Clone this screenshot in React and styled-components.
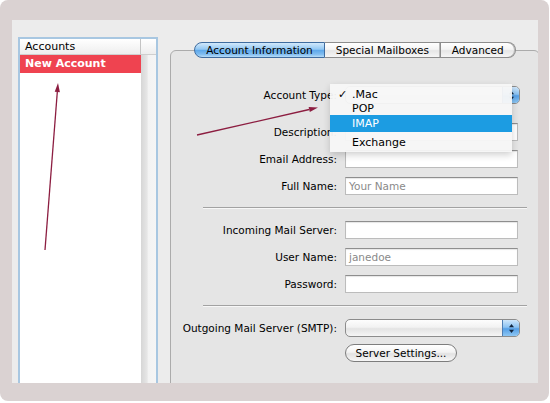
import styled, { createGlobalStyle } from "styled-components";

const GlobalStyle = createGlobalStyle`
  html, body {
    margin: 0;
    padding: 0;
    background: #ffffff;
  }
  body {
    font-family: "DejaVu Sans", "Liberation Sans", sans-serif;
    font-size: 10.5px;
    color: #000;
  }
`;

const Frame = styled.div`
  position: relative;
  width: 549px;
  height: 401px;
  box-sizing: border-box;
  padding: 20px 11px 18px 12px;
  background: #dad2d2;
  border-radius: 8px;
`;

const Window = styled.div`
  display: flex;
  gap: 12px;
  height: 100%;
  box-sizing: border-box;
  padding: 17px 0 0 6px;
  background: #ececec;
  overflow: hidden;
`;

const Sidebar = styled.div`
  flex: 0 0 140px;
  height: 360px;
  box-sizing: border-box;
  display: flex;
  border: 2px solid #a8c7e1;
  border-bottom: none;
  background: #fff;
`;

const ListCol = styled.div`
  flex: 1;
  display: flex;
  flex-direction: column;
`;

const ListHeader = styled.div`
  height: 16px;
  box-sizing: border-box;
  padding-left: 5px;
  line-height: 15px;
  font-size: 11px;
  background: linear-gradient(#ffffff, #eeeeee);
  border-bottom: 1px solid #cfcfcf;
  border-right: 1px solid #c4c4c4;
`;

const ListRow = styled.div`
  height: 18px;
  padding-left: 5px;
  line-height: 18px;
  font-size: 11px;
  font-weight: bold;
  color: ${(p) => (p.$selected ? "#fff" : "#000")};
  background: ${(p) => (p.$selected ? "#ef4350" : "transparent")};
`;

const Scroller = styled.div`
  flex: 0 0 15px;
  display: flex;
  flex-direction: column;
`;

const ScrollCorner = styled.div`
  height: 16px;
  box-sizing: border-box;
  background: linear-gradient(#ffffff, #eeeeee);
  border-bottom: 1px solid #cfcfcf;
`;

const ScrollTrack = styled.div`
  flex: 1;
  background: linear-gradient(to right, #d6d6d6, #e6e6e6 40%, #f3f3f3 50%, #f5f5f5);
`;

const Main = styled.div`
  flex: 0 0 370px;
  padding-top: 13px;
`;

const TabBox = styled.div`
  height: 360px;
  border: 1px solid #ababab;
  border-radius: 6px;
  background: #e5e5e5;
`;

const TabBar = styled.div`
  display: flex;
  justify-content: center;
  margin-top: -9px;
`;

const Tab = styled.div`
  height: 16px;
  box-sizing: border-box;
  padding: 0 11px;
  line-height: 14px;
  white-space: nowrap;
  border: 1px solid ${(p) => (p.$active ? "#3f6c9f" : "#8d8d8d")};
  border-left-width: ${(p) => (p.$first ? "1px" : "0")};
  border-radius: ${(p) => (p.$first ? "8px 0 0 8px" : p.$last ? "0 8px 8px 0" : "0")};
  background: ${(p) =>
    p.$active
      ? "linear-gradient(#d2e9fb, #92c7f3 45%, #5ea8ea 52%, #7fbcf0 80%, #b7dcf8)"
      : "linear-gradient(#ffffff, #f4f4f4 45%, #e6e6e6 55%, #f6f6f6)"};
  box-shadow: ${(p) => (p.$active ? "none" : "inset -1px 0 0 #b8b8b8")};
`;

const Form = styled.div`
  display: flex;
  flex-direction: column;
  gap: 9px;
  padding-top: 28px;
`;

const Row = styled.div`
  display: grid;
  grid-template-columns: 166px 175px;
  column-gap: 8px;
  align-items: center;
  margin-top: ${(p) => p.$extra || 0}px;
`;

const Label = styled.div`
  text-align: right;
  white-space: nowrap;
`;

const TextField = styled.div`
  width: 173px;
  height: 18px;
  box-sizing: border-box;
  padding-left: 3px;
  line-height: 16px;
  background: #fff;
  border: 1px solid #bcbcbc;
  border-top-color: #8e8e8e;
  box-shadow: inset 0 1px 1px rgba(0, 0, 0, 0.1);
  color: #8a8a8a;
`;

const Separator = styled.div`
  width: 324px;
  height: 1px;
  margin: 3px 0 3px 32px;
  background: #a2a2a2;
  border-bottom: 1px solid #f7f7f7;
`;

const PopupWrap = styled.div`
  position: relative;
  width: 175px;
  height: 18px;
`;

const Popup = styled.div`
  display: flex;
  justify-content: flex-end;
  width: 175px;
  height: 18px;
  box-sizing: border-box;
  border: 1px solid #8c8c8c;
  border-radius: 5px;
  overflow: hidden;
  background: linear-gradient(#fdfdfd, #f2f2f2 45%, #e3e3e3 55%, #f5f5f5);
`;

const PopupCap = styled.div`
  display: flex;
  align-items: center;
  justify-content: center;
  width: 16px;
  border-left: 1px solid #4f7eb3;
  background: linear-gradient(#cfe6fa, #8cc3f2 45%, #559fe6 55%, #8ec7f3);
`;

const Menu = styled.div`
  position: absolute;
  left: -15px;
  top: -2px;
  width: 182px;
  padding-top: 2px;
  background: rgba(247, 247, 247, 0.95);
  box-shadow: 0 3px 7px rgba(0, 0, 0, 0.18);
  z-index: 2;
`;

const MenuItem = styled.div`
  display: flex;
  align-items: center;
  height: ${(p) => p.$h}px;
  padding-left: 8px;
  font-size: 11px;
  color: ${(p) => (p.$active ? "#fff" : "#000")};
  background: ${(p) => (p.$active ? "#1c9ce2" : "transparent")};
`;

const Check = styled.span`
  width: 14px;
`;

const PushButton = styled.div`
  width: 112px;
  height: 18px;
  box-sizing: border-box;
  border: 1px solid #7d7d7d;
  border-radius: 9px;
  line-height: 16px;
  text-align: center;
  white-space: nowrap;
  background: linear-gradient(#ffffff, #f3f3f3 45%, #e2e2e2 55%, #f7f7f7);
`;

const Overlay = styled.svg`
  position: absolute;
  top: 0;
  left: 0;
  pointer-events: none;
  z-index: 5;
`;

function Arrow({ x1, y1, x2, y2 }) {
  const len = Math.hypot(x2 - x1, y2 - y1);
  const dx = (x2 - x1) / len;
  const dy = (y2 - y1) / len;
  const bx = x2 - dx * 9;
  const by = y2 - dy * 9;
  const w = 2.6;
  const pts = `${x2},${y2} ${bx - dy * w},${by + dx * w} ${bx + dy * w},${by - dx * w}`;
  return (
    <g>
      <line x1={x1} y1={y1} x2={bx} y2={by} stroke="#8c1d40" strokeWidth="1.3" />
      <polygon points={pts} fill="#8c1d40" />
    </g>
  );
}

function SelectCap() {
  return (
    <PopupCap>
      <svg width="7" height="11" viewBox="0 0 7 11">
        <path d="M3.5 1 L6 4.2 L1 4.2 Z" fill="#12253d" />
        <path d="M3.5 10 L6 6.8 L1 6.8 Z" fill="#12253d" />
      </svg>
    </PopupCap>
  );
}

export default function App() {
  return (
    <>
      <GlobalStyle />
      <Frame>
        <Window>
          <Sidebar>
            <ListCol>
              <ListHeader>Accounts</ListHeader>
              <ListRow $selected>New Account</ListRow>
            </ListCol>
            <Scroller>
              <ScrollCorner />
              <ScrollTrack />
            </Scroller>
          </Sidebar>
          <Main>
            <TabBox>
              <TabBar>
                <Tab $active $first>Account Information</Tab>
                <Tab>Special Mailboxes</Tab>
                <Tab $last>Advanced</Tab>
              </TabBar>
              <Form>
                <Row>
                  <Label>Account Type:</Label>
                  <PopupWrap>
                    <Popup>
                      <SelectCap />
                    </Popup>
                    <Menu>
                      <MenuItem $h={16}><Check>✓</Check>.Mac</MenuItem>
                      <MenuItem $h={13}><Check />POP</MenuItem>
                      <MenuItem $h={17} $active><Check />IMAP</MenuItem>
                      <MenuItem $h={20}><Check />Exchange</MenuItem>
                    </Menu>
                  </PopupWrap>
                </Row>
                <Row $extra={10}>
                  <Label>Description:</Label>
                  <TextField />
                </Row>
                <Row>
                  <Label>Email Address:</Label>
                  <TextField />
                </Row>
                <Row>
                  <Label>Full Name:</Label>
                  <TextField>Your Name</TextField>
                </Row>
                <Separator />
                <Row>
                  <Label>Incoming Mail Server:</Label>
                  <TextField />
                </Row>
                <Row>
                  <Label>User Name:</Label>
                  <TextField>janedoe</TextField>
                </Row>
                <Row>
                  <Label>Password:</Label>
                  <TextField />
                </Row>
                <Separator />
                <Row>
                  <Label>Outgoing Mail Server (SMTP):</Label>
                  <Popup>
                    <SelectCap />
                  </Popup>
                </Row>
                <Row $extra={-2}>
                  <span />
                  <PushButton>Server Settings...</PushButton>
                </Row>
              </Form>
            </TabBox>
          </Main>
        </Window>
        <Overlay width="550" height="403">
          <Arrow x1={45} y1={250} x2={58} y2={83} />
          <Arrow x1={197} y1={135} x2={318} y2={107.5} />
        </Overlay>
      </Frame>
    </>
  );
}
